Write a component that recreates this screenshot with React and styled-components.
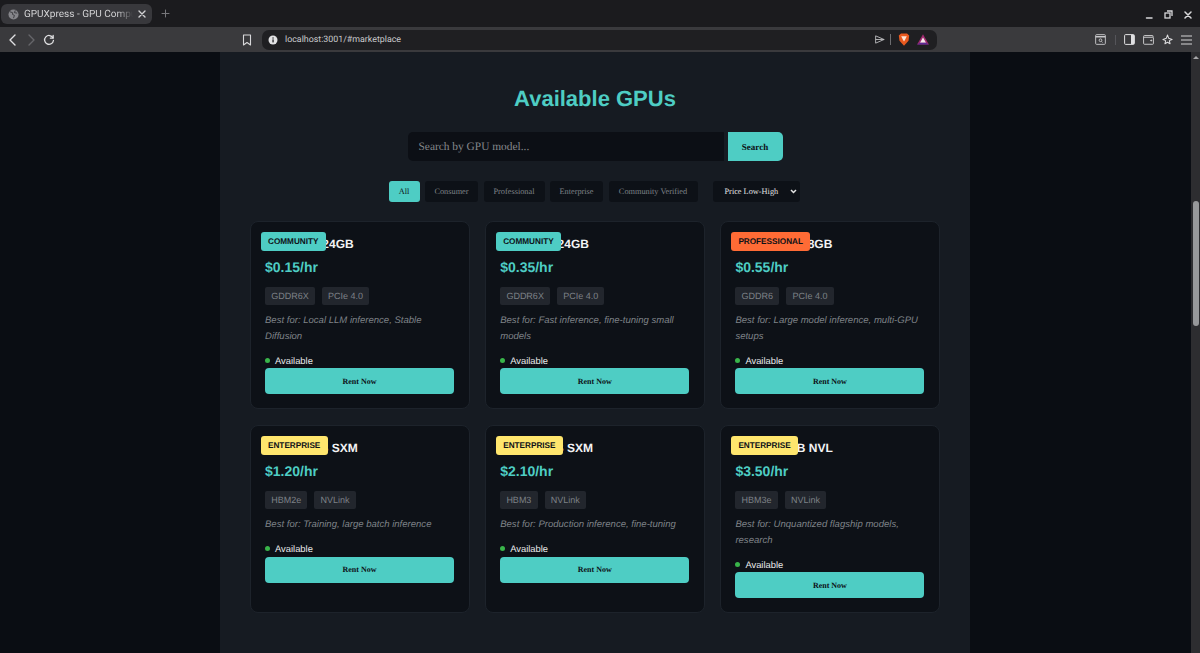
import React from "react";
import styled, { createGlobalStyle } from "styled-components";

const Global = createGlobalStyle`
  html, body { margin: 0; padding: 0; height: 100%; background: #0a0d13; overflow: hidden; }
  * { box-sizing: border-box; text-rendering: geometricPrecision; }
`;
const sans = `"Liberation Sans", Arial, sans-serif`;
const serif = `"Liberation Serif", "Times New Roman", serif`;
const ui = `Roboto, "Noto Sans", sans-serif`;

const Window = styled.div`width: 1200px; height: 653px; display: flex; flex-direction: column; overflow: hidden;`;
const TabBar = styled.div`height: 27px; background: #1b1b1e; display: flex; align-items: flex-start; padding: 4px 0 0 1px; color: #d8d8da;`;
const Tab = styled.div`width: 151px; height: 20px; background: #38383c; border-radius: 6px; display: flex; align-items: center; padding: 0 6px 0 7px; gap: 5px; font: 10px ${ui}; color: #d2d2d4;`;
const TabTitle = styled.span`flex: 1; overflow: hidden; white-space: nowrap; mask-image: linear-gradient(90deg, #000 85%, transparent);`;
const NewTab = styled.div`margin: 5px 0 0 9px; display: flex;`;
const Spacer = styled.div`flex: 1;`;
const WinControls = styled.div`display: flex; gap: 11px; padding: 6px 8px 0 0; align-items: center;`;
const Toolbar = styled.div`height: 25px; background: #3a3a3d; display: flex; align-items: center; padding: 0 8px 0 7px;`;
const NavGroup = styled.div`display: flex; align-items: center; gap: 6px; width: 233px;`;
const BookmarkSlot = styled.div`width: 22px; padding-left: 2px; display: flex; align-items: center;`;
const UrlBar = styled.div`width: 675px; height: 20px; border-radius: 7px; background: #1f1f22; display: flex; align-items: center; padding: 0 8px 0 6px; font: 8.85px ${ui}; color: #c9c9cc;`;
const UrlText = styled.span`flex: 1; margin-left: 7px;`;
const UrlDivider = styled.i`width: 1px; height: 11px; margin: 0 7px 0 5px; background: #6d6d70;`;
const IconSlot = styled.span`display: flex; margin-left: ${p => p.$ml || 0}px;`;
const RightTools = styled.div`flex: 1; display: flex; align-items: center; justify-content: flex-end; gap: 8px;`;
const ToolDivider = styled.i`width: 1px; height: 10px; background: #55555a; margin: 0 0 0 1px;`;

const Viewport = styled.div`flex: 1; min-height: 0; display: flex; background: #0a0d13;`;
const Outer = styled.div`flex: 1; display: flex; justify-content: center; padding-right: 1px; overflow: hidden;`;
const Container = styled.main`width: 750px; background: #161b22; padding: 34px 30px 0; display: flex; flex-direction: column; align-items: stretch; height: 100%;`;
const Scrollbar = styled.div`width: 9px; background: #2d2d30; flex: none; display: flex; flex-direction: column; align-items: center;`;
const ScrollArrow = styled.i`margin-top: 4px; width: 0; height: 0; border: 3px solid transparent; border-top: 0; border-bottom: 3px solid #a6a6a8;`;
const Thumb = styled.div`width: 6px; height: 125px; margin-top: 142px; background: #97989a; border-radius: 3px;`;

const Heading = styled.h1`margin: 0; text-align: center; font: 700 22px/26px ${sans}; color: #4ecdc4;`;
const SearchRow = styled.form`display: flex; justify-content: center; margin-top: 20px; height: 29px;`;
const SearchInput = styled.div`width: 316px; background: #0c0f15; border-radius: 5px 0 0 5px; padding: 0 11px; display: flex; align-items: center; font: 11.4px ${serif}; color: #85888c;`;
const SearchButton = styled.button`width: 55px; margin-left: 4px; border: none; padding: 0; background: #4ecdc4; border-radius: 0 5px 5px 0; font: 700 9px ${serif}; color: #0d1117;`;
const FilterRow = styled.div`display: flex; justify-content: center; align-items: center; gap: 5.5px; margin-top: 20px; height: 21px; padding-right: 2px;`;
const FilterBtn = styled.button`width: ${p => p.$w}px; height: 21px; padding: 0; border: none; border-radius: 3px; background: ${p => (p.$active ? "#4ecdc4" : "#0d1117")}; color: ${p => (p.$active ? "#0d1117" : "#7e8287")}; font: 400 8.3px ${serif};`;
const SortBox = styled.div`width: 87px; height: 21px; margin-left: 9.5px; background: #0d1117; border-radius: 3px; display: flex; align-items: center; justify-content: space-between; padding: 0 3px 0 12px; font: 400 8.3px ${serif}; color: #e3e3e3;`;

const Grid = styled.div`display: grid; grid-template-columns: repeat(3, 220px); grid-auto-rows: 188px; column-gap: 15.2px; row-gap: 16px; margin-top: 19px;`;
const Card = styled.article`position: relative; background: #0d1117; border: 1px solid #1d232b; border-radius: 8px; padding: 15px 15px 0 14px; display: flex; flex-direction: column;`;
const Badge = styled.span`position: absolute; top: 10px; left: 9.5px; height: 18.5px; padding: 0 7.5px; display: flex; align-items: center; border-radius: 3px; background: ${p => p.$bg}; color: #0d1117; font: 700 8.2px ${sans};`;
const Title = styled.h3`margin: 0; font: 700 12px/14px ${sans}; color: #f2f3f4; white-space: nowrap;`;
const Price = styled.div`margin-top: 6px; font: 700 14px/20px ${sans}; color: #4ecdc4;`;
const Tags = styled.div`display: flex; gap: 7px; margin-top: 10px;`;
const Tag = styled.span`height: 18px; padding: 0 6.2px; display: flex; align-items: center; border-radius: 2px; background: #22262d; color: #7d8187; font: 400 9px ${sans};`;
const Desc = styled.p`margin: 8px 0 0; font: italic 400 9.55px/15.5px ${sans}; color: #7f8388;`;
const Status = styled.div`margin-top: 8px; height: 16px; display: flex; align-items: center; gap: 5px; font: 400 9.4px ${sans}; color: #e8e9ea;`;
const Dot = styled.i`width: 5px; height: 5px; border-radius: 50%; background: #39b54a;`;
const Rent = styled.button`height: 26px; border: none; border-radius: 4px; background: #4ecdc4; color: #0d1117; font: 700 8px ${serif}; padding: 0;`;

const Stroke = { fill: "none", stroke: "currentColor", strokeWidth: 1.4, strokeLinecap: "round", strokeLinejoin: "round" };

const Globe = () => (
  <svg width="11" height="11" viewBox="0 0 12 12"><circle cx="6" cy="6" r="5.5" fill="#85858a" /><path d="M2 3l3 1 0 2 2 1-1 3M8 1.5L7 4l3 .5" stroke="#38383c" fill="none" /></svg>
);
const BrowserIcons = {
  close: <svg width="8" height="8" viewBox="0 0 8 8" {...Stroke}><path d="M1 1l6 6M7 1L1 7" /></svg>,
  plus: <svg width="9" height="9" viewBox="0 0 9 9" {...Stroke} strokeWidth="1" color="#77777b"><path d="M4.5 1v7M1 4.5h7" /></svg>,
  min: <svg width="8" height="8" viewBox="0 0 8 8" {...Stroke} strokeWidth="1.5"><path d="M1.5 7h5.5" /></svg>,
  restore: <svg width="9" height="9" viewBox="0 0 9 9" fill="none" stroke="currentColor" strokeWidth="1.3"><rect x="1" y="3" width="5" height="5" /><path d="M3 1h5v5" /></svg>,
  x: <svg width="8" height="8" viewBox="0 0 8 8" {...Stroke} strokeWidth="1.5"><path d="M1 1l6 6M7 1L1 7" /></svg>,
  back: <svg width="12" height="14" viewBox="0 0 12 14" {...Stroke} color="#e0e0e2"><path d="M8 2L3 7l5 5" /></svg>,
  forward: <svg width="12" height="14" viewBox="0 0 12 14" {...Stroke} color="#66666a"><path d="M4 2l5 5-5 5" /></svg>,
  reload: <svg width="12" height="12" viewBox="0 0 13 13" {...Stroke} color="#e0e0e2"><path d="M10.8 4.2A4.8 4.8 0 1 0 11.3 7" /><path d="M11 1.5v3H8" /></svg>,
  bookmark: <svg width="10" height="12" viewBox="0 0 10 12" {...Stroke} strokeWidth="1.1" color="#d8d8da"><path d="M1.5 1h7v10L5 8.5 1.5 11z" /></svg>,
  info: <svg width="10" height="10" viewBox="0 0 10 10"><circle cx="5" cy="5" r="4.5" fill="#e2e2e4" /><rect x="4.4" y="4.4" width="1.3" height="3" fill="#1f1f22" /><rect x="4.4" y="2.4" width="1.3" height="1.2" fill="#1f1f22" /></svg>,
  send: <svg width="10" height="9" viewBox="0 0 10 9" {...Stroke} strokeWidth="0.9" color="#bdbdc0"><path d="M1 1l8 3.5L1 8zM1 4.5h8" /></svg>,
  brave: <svg width="12" height="13" viewBox="0 0 12 13"><path d="M3 .4h6l2.2 2-.7 5.3L6 12.8 1.5 7.7.8 2.4z" fill="#e8591f" /><path d="M3.2 3.2h5.6L7.2 6.6 6 8.6 4.8 6.6z" fill="#fbe6d8" /></svg>,
  bat: <svg width="12" height="11" viewBox="0 0 12 11"><path d="M6 .2L11.9 10.6H.1z" fill="#a02a70" /><path d="M6 3.4L9 8.7H3z" fill="#f6ecec" /><path d="M.1 10.6L3 8.7h6l2.9 1.9z" fill="#5a2a96" /></svg>,
  screenshot: <svg width="11" height="11" viewBox="0 0 12 12" fill="none" stroke="#c9c9cc" strokeWidth="1"><rect x=".7" y=".7" width="10.6" height="10.6" rx="1" /><path d="M.7 3h10.6" strokeWidth="1.6" /><circle cx="6" cy="6.8" r="1.5" /><path d="M7 8l1.2 1.2" /></svg>,
  sidebar: <svg width="11" height="11" viewBox="0 0 11 11"><rect x=".6" y=".6" width="9.8" height="9.8" rx="1" fill="none" stroke="#e0e0e2" /><rect x="7" y="1" width="3" height="9" fill="#e0e0e2" /></svg>,
  wallet: <svg width="11" height="10" viewBox="0 0 12 11" fill="none" stroke="#d4d4d6"><path d="M11 2.5V1.2a.6.6 0 0 0-.6-.6H1.6a1 1 0 0 0-1 1v7.6a1 1 0 0 0 1 1h9a.8.8 0 0 0 .8-.8V3.3a.8.8 0 0 0-.8-.8H.8" /><circle cx="9" cy="6" r=".6" fill="#d4d4d6" /></svg>,
  leo: <svg width="11" height="11" viewBox="0 0 12 12" {...Stroke} strokeWidth="1.1" color="#dcdcde"><path d="M6 1l1.3 3.7L11 6 8 7.2 8.8 10.6 6 9 3.2 10.6 4 7.2 1 6l3.7-1.3z" /></svg>,
  menu: <svg width="11" height="10" viewBox="0 0 11 10" stroke="#d4d4d6" strokeWidth="1"><path d="M0 1h11M0 5h11M0 9h11" /></svg>,
};

const filters = [["All", 31, true], ["Consumer", 53], ["Professional", 61], ["Enterprise", 53], ["Community Verified", 89]];
const community = { label: "COMMUNITY", bg: "#4ecdc4" };
const pro = { label: "PROFESSIONAL", bg: "#ff6b35" };
const ent = { label: "ENTERPRISE", bg: "#ffe66d" };
const gpus = [
  { name: "RTX 3090 24GB", price: "$0.15/hr", tags: ["GDDR6X", "PCIe 4.0"], use: "Local LLM inference, Stable Diffusion", tier: community },
  { name: "RTX 4090 24GB", price: "$0.35/hr", tags: ["GDDR6X", "PCIe 4.0"], use: "Fast inference, fine-tuning small models", tier: community },
  { name: "RTX A6000 48GB", price: "$0.55/hr", tags: ["GDDR6", "PCIe 4.0"], use: "Large model inference, multi-GPU setups", tier: pro },
  { name: "A100 80GB SXM", price: "$1.20/hr", tags: ["HBM2e", "NVLink"], use: "Training, large batch inference", tier: ent },
  { name: "H100 80GB SXM", price: "$2.10/hr", tags: ["HBM3", "NVLink"], use: "Production inference, fine-tuning", tier: ent },
  { name: "H200 141GB NVL", price: "$3.50/hr", tags: ["HBM3e", "NVLink"], use: "Unquantized flagship models, research", tier: ent },
];

export default function App() {
  return (
    <Window>
      <Global />
      <TabBar>
        <Tab><Globe /><TabTitle>GPUXpress - GPU Compute</TabTitle>{BrowserIcons.close}</Tab>
        <NewTab>{BrowserIcons.plus}</NewTab>
        <Spacer />
        <WinControls>{BrowserIcons.min}{BrowserIcons.restore}{BrowserIcons.x}</WinControls>
      </TabBar>
      <Toolbar>
        <NavGroup>{BrowserIcons.back}{BrowserIcons.forward}{BrowserIcons.reload}</NavGroup>
        <BookmarkSlot>{BrowserIcons.bookmark}</BookmarkSlot>
        <UrlBar>
          {BrowserIcons.info}
          <UrlText>localhost:3001/#marketplace</UrlText>
          {BrowserIcons.send}<UrlDivider />
          <IconSlot>{BrowserIcons.brave}</IconSlot>
          <IconSlot $ml={7}>{BrowserIcons.bat}</IconSlot>
        </UrlBar>
        <RightTools>
          {BrowserIcons.screenshot}<ToolDivider />{BrowserIcons.sidebar}{BrowserIcons.wallet}{BrowserIcons.leo}{BrowserIcons.menu}
        </RightTools>
      </Toolbar>
      <Viewport>
        <Outer>
          <Container>
            <Heading>Available GPUs</Heading>
            <SearchRow onSubmit={e => e.preventDefault()}>
              <SearchInput>Search by GPU model...</SearchInput>
              <SearchButton>Search</SearchButton>
            </SearchRow>
            <FilterRow>
              {filters.map(([label, w, active]) => <FilterBtn key={label} $w={w} $active={active}>{label}</FilterBtn>)}
              <SortBox>Price Low-High<svg width="7" height="5" viewBox="0 0 7 5" fill="none" stroke="#e3e3e3" strokeWidth="1.5"><path d="M1 1l2.5 2.5L6 1" /></svg></SortBox>
            </FilterRow>
            <Grid>
              {gpus.map(g => (
                <Card key={g.name}>
                  <Badge $bg={g.tier.bg}>{g.tier.label}</Badge>
                  <Title>{g.name}</Title>
                  <Price>{g.price}</Price>
                  <Tags>{g.tags.map(t => <Tag key={t}>{t}</Tag>)}</Tags>
                  <Desc>Best for: {g.use}</Desc>
                  <Status><Dot />Available</Status>
                  <Rent>Rent Now</Rent>
                </Card>
              ))}
            </Grid>
          </Container>
        </Outer>
        <Scrollbar><ScrollArrow /><Thumb /></Scrollbar>
      </Viewport>
    </Window>
  );
}
